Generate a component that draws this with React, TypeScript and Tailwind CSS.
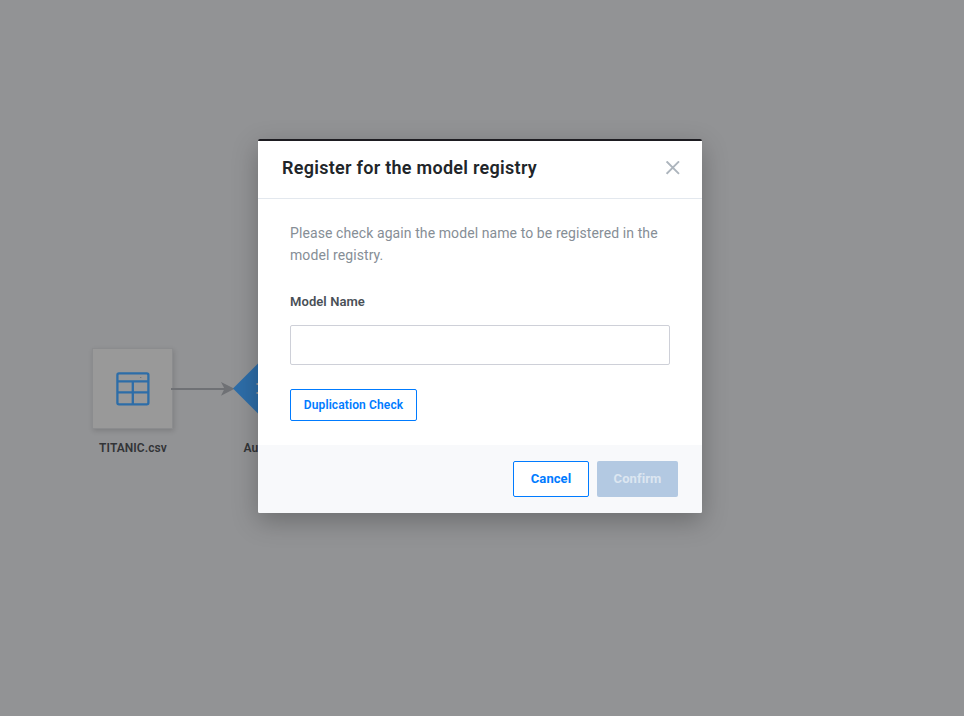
function TableIcon() {
  return (
    <svg width="34" height="34" viewBox="0 0 34 34" fill="none" stroke="#2d6da8" strokeWidth="2.3">
      <rect x="1.4" y="1.4" width="31" height="31" rx="1.6" />
      <path d="M1 9.4H32M1 20.4H32M16.8 9.4V32" />
      <circle cx="24.8" cy="5.6" r="0.5" fill="#555b60" stroke="none" />
    </svg>
  );
}

function Canvas() {
  return (
    <div className="absolute inset-0">
      <div className="absolute left-[92px] top-[348px] flex h-[81px] w-[81px] items-center justify-center border border-[#8b8c8e] bg-[#999999] shadow-[1px_2px_5px_rgba(0,0,0,0.14)]">
        <TableIcon />
      </div>
      <div className="absolute left-[83px] top-[440px] w-[100px] text-center text-[12px] font-semibold leading-4 tracking-[0.06px] text-[#323437]">
        TITANIC.csv
      </div>
      <svg className="absolute left-[171px] top-[340px]" width="142" height="100" viewBox="0 0 142 100">
        <path d="M0 48.9H56" stroke="#6f7175" strokeWidth="2" />
        <path d="M50 42L63.5 48.8L50 55.8L53.5 48.8Z" fill="#6f7175" />
        <path d="M62 48.5L102 8.5L142 48.5L102 88.5Z" fill="#2d6da8" />
        <path d="M85.5 44H94M85.5 53H94" stroke="#999999" strokeWidth="2" />
      </svg>
      <div className="absolute left-[243.5px] top-[440px] text-[12px] font-semibold leading-4 text-[#323437]">Au</div>
    </div>
  );
}

function Dialog() {
  return (
    <div className="relative ml-[258px] mt-[139px] flex h-[374px] w-[444px] flex-col overflow-hidden rounded-[2px] border-t-2 border-[#1d1c21] bg-white">
      <header className="flex h-[58px] items-center justify-between border-b border-[#e3e8ee] pl-6 pr-[22px]">
        <h1 className="pb-1 text-[18px] font-semibold leading-6 tracking-[0.28px] text-[#212529]">
          Register for the model registry
        </h1>
        <button aria-label="Close" className="mb-1">
          <svg width="14" height="14" viewBox="0 0 14 14" stroke="#adb5bd" strokeWidth="1.9">
            <path d="M0.6 0.4L13 12.8M13 0.4L0.6 12.8" />
          </svg>
        </button>
      </header>
      <main className="flex flex-1 flex-col items-start px-8 pt-[23px]">
        <p className="text-[14px] leading-[22px] tracking-[0.09px] text-[#868e96]">
          Please check again the model name to be registered in the model registry.
        </p>
        <label htmlFor="name" className="mt-[26px] text-[13px] font-semibold leading-5 tracking-[0.08px] text-[#495057]">
          Model Name
        </label>
        <input id="name" className="mt-[13px] h-10 w-full rounded-[2px] border border-[#ced0d8] px-3 outline-none" />
        <button className="mt-6 h-8 w-[127px] rounded-[2px] border border-[#007bff] text-[12px] font-semibold tracking-[0.12px] text-[#007bff]">
          Duplication Check
        </button>
      </main>
      <footer className="flex h-[68px] justify-end gap-2 bg-[#f8f9fb] pr-6 pt-4">
        <button className="h-9 w-[76px] rounded-[2px] border border-[#007bff] bg-white text-[13px] font-bold tracking-[0.08px] text-[#007bff]">
          Cancel
        </button>
        <button className="h-9 w-[81px] rounded-[2px] bg-[#b3c9e2] text-[13px] font-bold tracking-[0.08px] text-[#dce6f1]">
          Confirm
        </button>
      </footer>
    </div>
  );
}

export default function App() {
  return (
    <div className="relative flex h-[716px] w-[964px] items-start overflow-hidden bg-[#929395] font-['Roboto',sans-serif]">
      <Canvas />
      <div className="absolute left-[258px] top-[139px] h-[374px] w-[444px] shadow-[0_8px_24px_rgba(0,0,0,0.26)]" />
      <Dialog />
    </div>
  );
}
